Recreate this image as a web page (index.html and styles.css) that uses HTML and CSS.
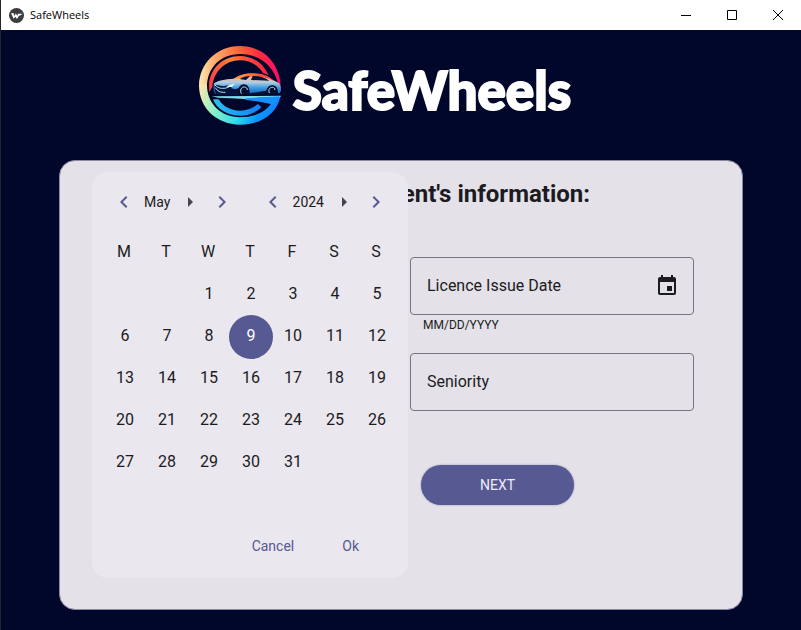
FILE: index.html
```html
<!DOCTYPE html>
<html lang="en">
<head>
<meta charset="utf-8">
<meta name="viewport" content="width=device-width, initial-scale=1">
<title>SafeWheels</title>
<link rel="stylesheet" href="styles.css">
</head>
<body>
<svg class="sprite" aria-hidden="true">
  <symbol id="chevron-left" viewBox="0 0 24 24"><path d="M15.41 16.58 10.83 12l4.58-4.59L14 6l-6 6 6 6z"/></symbol>
  <symbol id="chevron-right" viewBox="0 0 24 24"><path d="M8.59 16.58 13.17 12 8.59 7.41 10 6l6 6-6 6z"/></symbol>
  <symbol id="menu-right" viewBox="0 0 24 24"><path d="M10 17l5-5-5-5z"/></symbol>
</svg>
<div class="window">
  <header class="titlebar">
    <svg class="app-icon" viewBox="0 0 45 45" aria-hidden="true">
      <circle cx="22.500" cy="22.500" r="22.500" fill="#3b3d40"/>
      <path d="M6 16l7-1 4 9 3-8 5 7 2-6h13l-5 5-5 1-6 10-5-7-5 6z" fill="#fff"/>
    </svg>
    <span class="app-name">SafeWheels</span>
    <div class="controls">
      <button type="button" aria-label="Minimize"><svg viewBox="0 0 10 10"><path d="M0 5.500h10"/></svg></button>
      <button type="button" aria-label="Maximize"><svg viewBox="0 0 10 10"><path d="M.5.5h9v9h-9z"/></svg></button>
      <button type="button" aria-label="Close"><svg viewBox="0 0 10 10"><path d="M0 0l10 10M10 0L0 10"/></svg></button>
    </div>
  </header>

  <div class="brand">
    <svg class="brand-logo" viewBox="12 12 246 237" aria-hidden="true">
      <defs>
        <linearGradient id="warm" gradientUnits="userSpaceOnUse" x1="15" y1="130" x2="258" y2="120">
          <stop offset="0" stop-color="#fde6b0"/><stop offset=".18" stop-color="#ffb070"/><stop offset=".48" stop-color="#ff6b3c"/><stop offset=".75" stop-color="#ff2c3e"/><stop offset="1" stop-color="#ff0a68"/>
        </linearGradient>
        <linearGradient id="cool" gradientUnits="userSpaceOnUse" x1="20" y1="130" x2="240" y2="215">
          <stop offset="0" stop-color="#fbe6b0"/><stop offset=".25" stop-color="#8ff3c6"/><stop offset=".55" stop-color="#35ddea"/><stop offset=".8" stop-color="#0a98ff"/><stop offset="1" stop-color="#1480ff"/>
        </linearGradient>
        <linearGradient id="inner" gradientUnits="userSpaceOnUse" x1="44" y1="150" x2="220" y2="80">
          <stop offset="0" stop-color="#ff3048"/><stop offset=".5" stop-color="#ff8238"/><stop offset="1" stop-color="#ff1745"/>
        </linearGradient>
        <linearGradient id="deep" gradientUnits="userSpaceOnUse" x1="55" y1="180" x2="220" y2="190">
          <stop offset="0" stop-color="#2bc0ec"/><stop offset=".5" stop-color="#159ef5"/><stop offset="1" stop-color="#1673ff"/>
        </linearGradient>
        <linearGradient id="paint" gradientUnits="userSpaceOnUse" x1="0" y1="105" x2="0" y2="158">
          <stop offset="0" stop-color="#ffb090"/><stop offset=".3" stop-color="#b0cfe2"/><stop offset=".6" stop-color="#3f9de0"/><stop offset="1" stop-color="#0f58b8"/>
        </linearGradient>
        <linearGradient id="roof" gradientUnits="userSpaceOnUse" x1="120" y1="100" x2="245" y2="120">
          <stop offset="0" stop-color="#ffa048"/><stop offset=".5" stop-color="#ff6038"/><stop offset="1" stop-color="#ff1848"/>
        </linearGradient>
      </defs>
      <path d="M12 134C11 66 64 12 135 12c72 0 124 54 123 136h-4C246 82 203 36 135 36 76 36 36 78 36 134z" fill="url(#warm)"/>
      <path d="M12 130c0 68 53 118 123 118 68 0 112-38 121-84l-20 5c-10 33-48 57-101 57-58 0-99-42-99-96z" fill="url(#cool)"/>
      <path d="M43 150C34 86 80 42 135 42c38 0 71 22 86 58l-17-7C190 70 166 55 135 55 89 55 56 90 52 134z" fill="url(#inner)"/>
      <path d="M54 172h17c12 21 36 34 64 34 22 0 39-8 54-20l10 10c-16 16-39 25-64 25-38 0-70-20-81-49z" fill="url(#deep)"/>
      <path d="M50 163l208-2-2 4-76 3c18 5 38 9 54 16-30-6-70-15-164-17z" fill="#7fdcec"/>
      <path d="M150 169l104-6-16 26c-26-6-50-12-88-16z" fill="#188fff"/>
      <path d="M57 124c12-8 32-13 58-14 14-9 34-15 56-15 31 0 50 7 63 19l18 10c7 9 6 21 3 29l-6 1c0-16-6-24-17-24-12 0-19 11-18 25l-51 1c1-18-4-29-16-29-13 0-19 12-17 30l-70-1c-4-8-5-20-3-32z" fill="url(#paint)"/>
      <path d="M59 128l26 5 31-6-8 12 14 3 10-5-2 20-66 1c-5-8-7-19-5-30z" fill="#04123c"/>
      <path d="M59 128c7 8 14 11 24 11 13 0 20-4 26-10M61 137c6 10 14 15 30 14" fill="none" stroke="#b7edfa" stroke-width="3"/>
      <path d="M94 135c8-7 16-10 26-10l-9 10z" fill="#d9f6ff"/>
      <path d="M118 110c14-11 33-16 53-16 31 0 52 8 64 22-16-9-31-12-55-12-20 0-36 1-50 7z" fill="url(#roof)"/>
      <path d="M134 111c9-6 20-8 31-9l-12 12zM168 114l5-12c20 0 37 4 50 14z" fill="#061032"/>
      <path d="M164 154l50-8-1 12-49 1z" fill="#061032"/>
      <path d="M132 159c-4-19 3-29 16-29 12 0 17 11 15 29zM215 158c-2-19 5-27 17-27 11 0 16 10 14 27z" fill="#040e30"/>
      <path d="M139 155c-5-11 0-20 9-20 6 0 9 4 9 9M223 153c-4-10 1-17 9-17 5 0 8 3 8 8" fill="none" stroke="#abeaf4" stroke-width="3"/>
    </svg>
    <span class="wordmark">SafeWheels</span>
  </div>

  <main class="card">
    <h1>ent's information:</h1>
    <form class="form">
      <div class="field">
        <label for="issue">Licence Issue Date</label>
        <input id="issue" type="text">
        <svg class="icon" viewBox="0 0 24 24" aria-hidden="true"><path d="M19 19H5V8h14m-3-7v2H8V1H6v2H5c-1.110 0-2 .89-2 2v14a2 2 0 0 0 2 2h14a2 2 0 0 0 2-2V5a2 2 0 0 0-2-2h-1V1m-1 11h-5v5h5z"/></svg>
      </div>
      <p class="hint">MM/DD/YYYY</p>
      <div class="field">
        <label for="seniority">Seniority</label>
        <input id="seniority" type="text">
      </div>
      <button class="next" type="button">NEXT</button>
    </form>

    <section class="picker" aria-label="Date">
      <div class="picker-nav">
        <div class="stepper">
          <button type="button" aria-label="Previous month"><svg class="icon"><use href="#chevron-left"/></svg></button>
          <span>May</span>
          <button class="open" type="button" aria-label="Choose month"><svg class="icon"><use href="#menu-right"/></svg></button>
          <button type="button" aria-label="Next month"><svg class="icon"><use href="#chevron-right"/></svg></button>
        </div>
        <div class="stepper">
          <button type="button" aria-label="Previous year"><svg class="icon"><use href="#chevron-left"/></svg></button>
          <span>2024</span>
          <button class="open" type="button" aria-label="Choose year"><svg class="icon"><use href="#menu-right"/></svg></button>
          <button type="button" aria-label="Next year"><svg class="icon"><use href="#chevron-right"/></svg></button>
        </div>
      </div>
      <table class="days">
        <thead><tr><th>M</th><th>T</th><th>W</th><th>T</th><th>F</th><th>S</th><th>S</th></tr></thead>
        <tbody>
          <tr><td></td><td></td><td><button type="button">1</button></td><td><button type="button">2</button></td><td><button type="button">3</button></td><td><button type="button">4</button></td><td><button type="button">5</button></td></tr>
          <tr><td><button type="button">6</button></td><td><button type="button">7</button></td><td><button type="button">8</button></td><td><button class="selected" type="button">9</button></td><td><button type="button">10</button></td><td><button type="button">11</button></td><td><button type="button">12</button></td></tr>
          <tr><td><button type="button">13</button></td><td><button type="button">14</button></td><td><button type="button">15</button></td><td><button type="button">16</button></td><td><button type="button">17</button></td><td><button type="button">18</button></td><td><button type="button">19</button></td></tr>
          <tr><td><button type="button">20</button></td><td><button type="button">21</button></td><td><button type="button">22</button></td><td><button type="button">23</button></td><td><button type="button">24</button></td><td><button type="button">25</button></td><td><button type="button">26</button></td></tr>
          <tr><td><button type="button">27</button></td><td><button type="button">28</button></td><td><button type="button">29</button></td><td><button type="button">30</button></td><td><button type="button">31</button></td><td></td><td></td></tr>
        </tbody>
      </table>
      <div class="picker-actions">
        <button type="button">Cancel</button>
        <button type="button">Ok</button>
      </div>
    </section>
  </main>
</div>
</body>
</html>
```
FILE: styles.css
```css
* { box-sizing: border-box; }

body {
  margin: 0;
  font-family: Roboto, "Liberation Sans", sans-serif;
  font-size: 16px;
  color: #1b1b21;
  background: #00072a;
}

button {
  padding: 0;
  border: 0;
  background: none;
  color: inherit;
  font: inherit;
}

.sprite { display: none; }

.icon {
  display: block;
  width: 24px;
  height: 24px;
  fill: currentColor;
}

.window {
  display: flex;
  flex-direction: column;
  min-height: 100vh;
  border-left: 1px solid #24252b;
}

.titlebar {
  display: flex;
  align-items: center;
  height: 30px;
  padding-left: 8px;
  background: #fff;
  color: #000;
}

.app-icon { width: 15px; height: 15px; }

.app-name {
  margin-left: 6px;
  font: 11px/16px "Open Sans", sans-serif;
}

.controls { display: flex; margin-left: auto; }

.controls button {
  display: grid;
  place-items: center;
  width: 46px;
  height: 28px;
}

.controls svg {
  width: 10px;
  height: 10px;
  fill: none;
  stroke: #000;
}

.brand {
  display: flex;
  align-items: flex-start;
  justify-content: center;
  gap: 12px;
  height: 130px;
  padding: 16px 32px 0 0;
}

.brand-logo { width: 82px; height: 79px; }

.wordmark {
  margin-top: 12px;
  font: 900 53px/64px Lato, sans-serif;
  color: #fff;
  -webkit-text-stroke: 2px #fff;
}

.card {
  position: relative;
  flex: 1;
  display: flex;
  flex-direction: column;
  align-items: flex-end;
  margin: 0 58px 20px;
  padding: 17px 48px 24px;
  border: 1px solid #8987a2;
  border-radius: 16px;
  background: #e4e1e8;
}

h1 {
  margin: 0 104px 47px 0;
  font-size: 24px;
  line-height: 32px;
  font-weight: 700;
}

.form {
  display: flex;
  flex-direction: column;
  width: 284px;
}

.field {
  display: flex;
  align-items: center;
  height: 58px;
  padding: 0 14px 1px 16px;
  border: 1px solid #77757d;
  border-radius: 4px;
}

.field input {
  flex: 1;
  min-width: 0;
  border: 0;
  outline: 0;
  background: none;
  font: inherit;
}

.hint {
  margin: 2px 13px 20px;
  font-size: 12px;
  line-height: 16px;
}

.next {
  width: 153px;
  height: 40px;
  margin: 54px 0 0 11px;
  border-radius: 20px;
  background: #565992;
  box-shadow: 0 0 2px #56599299;
  color: #eeecf8;
  font-size: 14px;
}

.picker {
  position: absolute;
  top: 11px;
  left: 32px;
  width: 316px;
  padding: 18px 10px 20px 12px;
  border-radius: 16px;
  background: #eae7ef;
}

.picker-nav {
  display: flex;
  justify-content: space-between;
  padding: 0 10px 0 8px;
  font-size: 14px;
}

.stepper {
  display: flex;
  align-items: center;
  gap: 8px;
  height: 24px;
}

.stepper button { color: #565992; }
.stepper .open { color: #46464f; }

.days {
  width: 100%;
  margin-top: 18px;
  border-collapse: collapse;
  table-layout: fixed;
}

.days th, .days td {
  height: 42px;
  padding: 0;
  font-weight: 400;
}

.days th { padding: 0 2px 4px 0; }

.days button {
  display: block;
  width: 42px;
  height: 42px;
  padding-bottom: 4px;
  border-radius: 50%;
}

.days .selected {
  background: #565992;
  box-shadow: 0 0 0 1px #565992;
  color: #fff;
}

.picker-actions {
  display: flex;
  justify-content: flex-end;
  gap: 48px;
  margin-top: 50px;
  padding-right: 39px;
  color: #565992;
  font-size: 14px;
  line-height: 24px;
}
```
